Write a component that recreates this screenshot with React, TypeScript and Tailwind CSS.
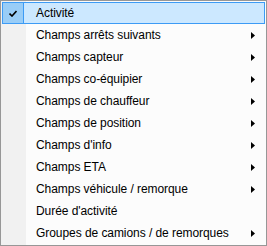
const items = [
  { label: "Activité", checked: true, sub: false },
  { label: "Champs arrêts suivants", sub: true },
  { label: "Champs capteur", sub: true },
  { label: "Champs co-équipier", sub: true },
  { label: "Champs de chauffeur", sub: true },
  { label: "Champs de position", sub: true },
  { label: "Champs d'info", sub: true },
  { label: "Champs ETA", sub: true },
  { label: "Champs véhicule / remorque", sub: true },
  { label: "Durée d'activité", sub: false },
  { label: "Groupes de camions / de remorques", sub: true },
];

const Arrow = () => (
  <svg width="4" height="7" viewBox="0 0 4 7" className="block">
    <path d="M0 0 L4 3.5 L0 7 Z" fill="#000" />
  </svg>
);

const Check = () => (
  <svg width="8" height="7" viewBox="0 0 8 7" className="block">
    <path d="M0.5 3.5 L3 6 L7.5 1" stroke="#000" strokeWidth="1.6" fill="none" />
  </svg>
);

export default function App() {
  return (
    <div className="w-[267px] h-[246px] border border-[#979797] bg-[#fcfcfc] p-px relative font-['Segoe_UI','Liberation_Sans',sans-serif] text-[12px] text-black">
      {/* gutter */}
      <div className="absolute left-0 top-0 bottom-0 w-[25px] bg-[#f1f1f1]" />
      <div className="relative flex flex-col">
        {items.map((it, i) => (
          <div
            key={i}
            className={`flex items-center h-[22px] ${
              it.checked ? "bg-[#cce8ff] border border-[#3d9bf5]" : "border border-transparent"
            }`}
          >
            <div
              className={`w-[22px] h-[22px] -m-px flex items-center justify-center shrink-0 ${
                it.checked ? "bg-[#99cdf7] border border-[#3d9bf5]" : ""
              }`}
            >
              {it.checked && <Check />}
            </div>
            <span className="ml-[13px] flex-1 leading-none whitespace-nowrap tracking-[-0.06px]">{it.label}</span>
            {it.sub && (
              <span className="mr-[9px]">
                <Arrow />
              </span>
            )}
          </div>
        ))}
      </div>
    </div>
  );
}
